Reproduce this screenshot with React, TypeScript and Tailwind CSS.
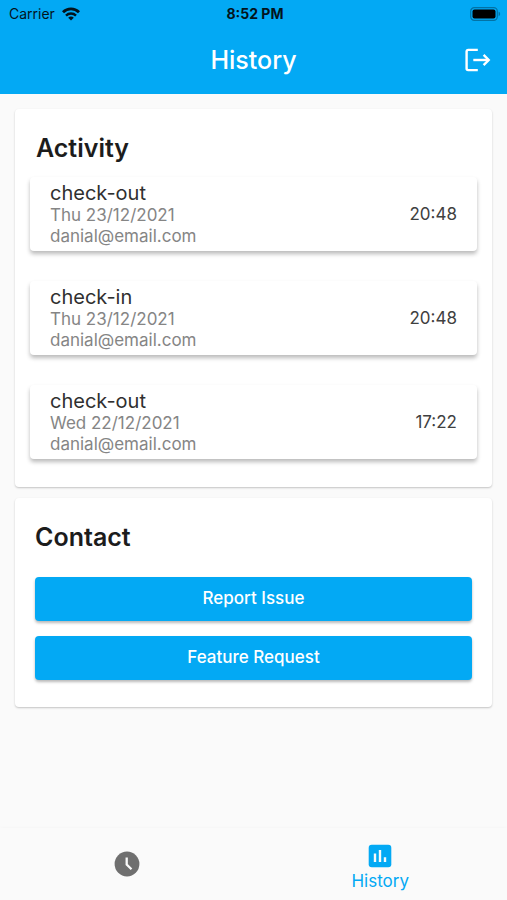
const activities = [
  { id: 1, type: 'check-out', date: 'Thu 23/12/2021', email: 'danial@email.com', time: '20:48' },
  { id: 2, type: 'check-in', date: 'Thu 23/12/2021', email: 'danial@email.com', time: '20:48' },
  { id: 3, type: 'check-out', date: 'Wed 22/12/2021', email: 'danial@email.com', time: '17:22' },
];

const contactActions = ['Report Issue', 'Feature Request'];

function WifiIcon() {
  return (
    <svg width="18" height="14" viewBox="0 0 18 14" fill="none" stroke="#03141d" strokeWidth="2.9" aria-hidden="true">
      <path d="M1 5.2C5.5.7 12.5.7 17 5.2" />
      <path d="M4 8.6c2.8-2.8 7.2-2.8 10 0" strokeWidth="2.4" />
      <path d="M9 13.6 6.2 10.7c1.6-1.5 4-1.5 5.6 0z" fill="#03141d" stroke="none" />
    </svg>
  );
}

function BatteryIcon() {
  return (
    <svg width="31" height="14" viewBox="0 0 31 14" aria-hidden="true">
      <rect x="0.7" y="0.7" width="26.6" height="12.6" rx="3.6" fill="none" stroke="#0272a5" strokeWidth="1.2" />
      <rect x="2.5" y="2.5" width="23" height="9" rx="2" fill="#000" />
      <path d="M28.6 4.8c2 .6 2 3.8 0 4.4z" fill="#0272a5" />
    </svg>
  );
}

function LogoutIcon() {
  return (
    <svg width="26" height="24" viewBox="0 0 26 24" fill="none" stroke="#fff" strokeWidth="2.4" strokeLinejoin="round" aria-hidden="true">
      <path d="M12.8 1.9H3.2Q1.6 1.9 1.6 3.5v17Q1.6 22.1 3.2 22.1h9.6" />
      <path d="M8.3 12h15.4" />
      <path d="m18.6 6.9 5.1 5.1-5.1 5.1" strokeLinejoin="miter" />
    </svg>
  );
}

function ClockIcon() {
  return (
    <svg width="26" height="26" viewBox="0 0 26 26" aria-hidden="true">
      <circle cx="13" cy="13" r="12.4" fill="#6f6f6f" />
      <path d="M12.7 6.6v6.9l4.8 4.7" fill="none" stroke="#fafafa" strokeWidth="2.3" />
    </svg>
  );
}

function ChartIcon() {
  return (
    <svg width="24" height="24" viewBox="0 0 24 24" aria-hidden="true">
      <rect x="0.7" y="0.7" width="22.6" height="22.6" rx="3" fill="#03a9f4" />
      <path d="M7 9.5V18M12 6v12M17 13.3V18" fill="none" stroke="#fafafa" strokeWidth="2.4" />
    </svg>
  );
}

export default function App() {
  return (
    <div className="flex min-h-screen flex-col bg-[#fafafa] font-['Inter',sans-serif] text-[#212121]">
      <header className="bg-[#03a9f4]">
        <div className="grid h-7 grid-cols-3 items-center pr-[6px] pl-[9px] text-[#03141d]">
          <div className="flex items-center gap-[7px] text-sm">
            <span>Carrier</span>
            <WifiIcon />
          </div>
          <span className="text-center text-sm font-bold">8:52 PM</span>
          <div className="flex justify-end">
            <BatteryIcon />
          </div>
        </div>
        <div className="grid h-[66px] grid-cols-3 items-center px-4 pb-[2px]">
          <h1 className="col-start-2 text-center text-[25px] leading-8 font-medium text-white">History</h1>
          <button type="button" aria-label="Log out" className="justify-self-end">
            <LogoutIcon />
          </button>
        </div>
      </header>

      <main className="flex flex-1 flex-col gap-[11px] px-[15px] pt-[15px] pb-6">
        <section className="rounded-sm bg-white px-[15px] pt-[23px] pb-7 shadow-[0_1px_2px_rgba(0,0,0,0.22)]">
          <h2 className="px-[6px] text-[25px] leading-8 font-semibold text-[#1c1c1c]">Activity</h2>
          <ul className="mt-[13px] flex flex-col gap-[30px]">
            {activities.map((item) => (
              <li
                key={item.id}
                className="flex items-center justify-between rounded bg-white px-5 py-1 shadow-[0_3px_4px_rgba(0,0,0,0.27)]"
              >
                <div className="text-[17px] leading-[21px] text-[#858585]">
                  <h3 className="text-xl leading-6 text-[#303030]">{item.type}</h3>
                  <p>{item.date}</p>
                  <p>{item.email}</p>
                </div>
                <time className="text-[17px] leading-[21px] text-[#404040]">{item.time}</time>
              </li>
            ))}
          </ul>
        </section>

        <section className="rounded-sm bg-white px-5 pt-[23px] pb-[27px] shadow-[0_1px_2px_rgba(0,0,0,0.22)]">
          <h2 className="text-[25px] leading-8 font-semibold text-[#1c1c1c]">Contact</h2>
          <div className="mt-6 flex flex-col gap-[15px]">
            {contactActions.map((label) => (
              <button
                key={label}
                type="button"
                className="h-11 rounded bg-[#03a9f4] text-[17px] font-medium text-white shadow-[0_2px_3px_rgba(0,0,0,0.28)]"
              >
                {label}
              </button>
            ))}
          </div>
        </section>
      </main>

      <nav className="grid h-[72px] grid-cols-2 bg-[#fafafa] shadow-[0_-1px_3px_rgba(0,0,0,0.02)]">
        <button type="button" aria-label="Clock" className="flex items-center justify-center">
          <ClockIcon />
        </button>
        <button type="button" aria-current="page" className="flex flex-col items-center justify-end gap-[1px] pb-[7px] text-[17px] leading-6 text-[#03a9f4]">
          <ChartIcon />
          <span>History</span>
        </button>
      </nav>
    </div>
  );
}
